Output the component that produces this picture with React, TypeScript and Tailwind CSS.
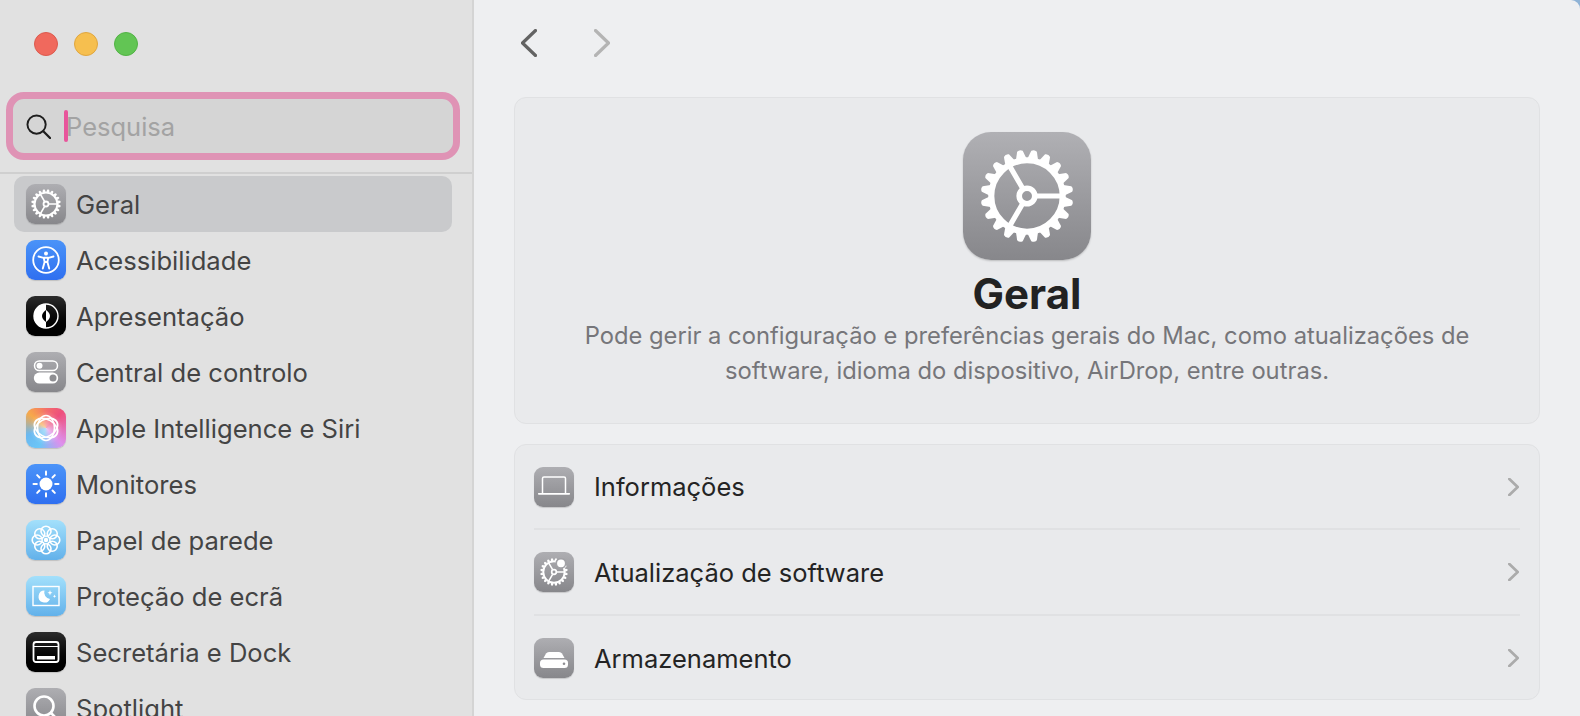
import { FC, ReactNode } from 'react'

const Gear: FC<{ className?: string; dot?: boolean }> = ({ className, dot }) => {
  const teeth = Array.from({ length: 20 }, (_, i) => i * 18 + 9)
  return (
    <svg viewBox="0 0 100 100" className={className}>
      {teeth.map(a => (
        <path key={a} d="M44.5 10 L47 1.8 Q50 -0.4 53 1.8 L55.5 10 Z" fill="white" transform={`rotate(${a} 50 50)`} />
      ))}
      <circle cx="50" cy="50" r="38" fill="none" stroke="white" strokeWidth="6.5" />
      <circle cx="50" cy="50" r="8.3" fill="none" stroke="white" strokeWidth="6" />
      <path d="M60 50 H87 M45 41.3 L31.5 18 M45 58.7 L31.5 82" stroke="white" strokeWidth="5.5" fill="none" />
      {dot && <circle cx="75" cy="19" r="17" fill="white" stroke="#a2a2a6" strokeWidth="6" />}
    </svg>
  )
}

const Tile: FC<{ className: string; children: ReactNode }> = ({ className, children }) => (
  <div className={`flex h-10 w-10 shrink-0 items-center justify-center rounded-[9px] shadow-[0_1px_1px_rgba(0,0,0,0.15)] ${className}`}>
    {children}
  </div>
)

const grayTile = 'bg-gradient-to-b from-[#aeaeb2] to-[#87878b]'
const blueTile = 'bg-gradient-to-b from-[#4b93f8] to-[#2f6ff0]'
const skyTile = 'bg-gradient-to-b from-[#a3e0fb] to-[#62b1ea]'
const blackTile = 'bg-gradient-to-b from-[#2c2c2c] to-black'

const sidebarItems: { label: string; tile: string; icon: ReactNode }[] = [
  { label: 'Geral', tile: grayTile, icon: <Gear className="h-[30px] w-[30px]" /> },
  {
    label: 'Acessibilidade',
    tile: blueTile,
    icon: (
      <svg viewBox="0 0 30 30" className="h-[30px] w-[30px]" fill="none" stroke="white">
        <circle cx="15" cy="15" r="12.8" strokeWidth="1.8" />
        <circle cx="15" cy="8.6" r="2" fill="white" stroke="none" />
        <path d="M7.5 11.5 L12.5 12.8 H17.5 L22.5 11.5 M12.8 13 L13.6 17 L11.8 23.5 M17.2 13 L16.4 17 L18.2 23.5 M13.6 17 H16.4" strokeWidth="1.9" strokeLinecap="round" />
      </svg>
    ),
  },
  {
    label: 'Apresentação',
    tile: blackTile,
    icon: (
      <svg viewBox="0 0 28 28" className="h-7 w-7">
        <circle cx="14" cy="14" r="12" fill="none" stroke="white" strokeWidth="1.4" />
        <path d="M14 2 A12 12 0 0 0 14 26 Z" fill="white" />
        <path d="M14 8 Q6 14 14 20 Z" fill="black" />
        <path d="M14 8 Q22 14 14 20 Z" fill="white" />
      </svg>
    ),
  },
  {
    label: 'Central de controlo',
    tile: grayTile,
    icon: (
      <svg viewBox="0 0 28 28" className="h-7 w-7">
        <rect x="2.5" y="3" width="23" height="9.5" rx="4.75" fill="none" stroke="white" strokeWidth="1.5" />
        <circle cx="7.5" cy="7.75" r="3" fill="white" />
        <rect x="1.8" y="14.6" width="24.4" height="11" rx="5.5" fill="white" />
        <circle cx="21" cy="20.1" r="3.5" fill="#8e8e92" />
      </svg>
    ),
  },
  {
    label: 'Apple Intelligence e Siri',
    tile: 'bg-[radial-gradient(circle,rgba(255,255,255,0.5),transparent_60%),conic-gradient(from_0deg_at_50%_50%,#f4706a,#ee4f7c_45deg,#dd90ec_135deg,#6cc6f7_200deg,#6ab8f0_250deg,#f7a94a_310deg,#f4706a)]',
    icon: (
      <svg viewBox="0 0 30 30" className="h-[30px] w-[30px]" fill="none" stroke="white" strokeWidth="1.7">
        {[30, 90, 150].map(a => (
          <ellipse key={a} cx="15" cy="15" rx="12.5" ry="8.5" transform={`rotate(${a} 15 15)`} />
        ))}
      </svg>
    ),
  },
  {
    label: 'Monitores',
    tile: blueTile,
    icon: (
      <svg viewBox="0 0 30 30" className="h-[30px] w-[30px]" stroke="white" strokeWidth="2" strokeLinecap="round">
        <circle cx="15" cy="15" r="6.5" fill="white" stroke="none" />
        {[0, 45, 90, 135, 180, 225, 270, 315].map(a => (
          <path key={a} d="M15 2.5 V5.8" transform={`rotate(${a} 15 15)`} />
        ))}
      </svg>
    ),
  },
  {
    label: 'Papel de parede',
    tile: skyTile,
    icon: (
      <svg viewBox="0 0 30 30" className="h-[30px] w-[30px]" fill="none" stroke="white" strokeWidth="1.6">
        {[0, 45, 90, 135, 180, 225, 270, 315].map(a => (
          <circle key={a} cx="15" cy="6.2" r="5" transform={`rotate(${a} 15 15)`} />
        ))}
        <circle cx="15" cy="15" r="2.2" fill="white" stroke="none" />
      </svg>
    ),
  },
  {
    label: 'Proteção de ecrã',
    tile: skyTile,
    icon: (
      <svg viewBox="0 0 30 30" className="h-[30px] w-[30px]" fill="none">
        <rect x="2" y="5.5" width="26" height="19" stroke="white" strokeWidth="1.4" />
        <path d="M13.5 9.5 A6 6 0 1 0 19 18 A6.5 6.5 0 0 1 13.5 9.5 Z" fill="white" />
        <path d="M19 9 L19.7 11 L21.5 11.7 L19.7 12.4 L19 14.4 L18.3 12.4 L16.5 11.7 L18.3 11 Z M23.5 13.5 L24 14.8 L25.3 15.3 L24 15.8 L23.5 17 L23 15.8 L21.7 15.3 L23 14.8 Z" fill="white" />
      </svg>
    ),
  },
  {
    label: 'Secretária e Dock',
    tile: blackTile,
    icon: (
      <svg viewBox="0 0 30 30" className="h-[30px] w-[30px]" fill="none">
        <rect x="2.5" y="5" width="25" height="20" rx="2.5" stroke="white" strokeWidth="1.8" />
        <path d="M3 9.5 H27" stroke="white" strokeWidth="1" />
        <rect x="6" y="19" width="18" height="3.5" fill="white" />
      </svg>
    ),
  },
  {
    label: 'Spotlight',
    tile: grayTile,
    icon: (
      <svg viewBox="0 0 30 30" className="h-[30px] w-[30px]" fill="none" stroke="white" strokeWidth="2.6" strokeLinecap="round">
        <circle cx="13" cy="13" r="9.5" />
        <path d="M20 20 L27 27" />
      </svg>
    ),
  },
]

const settingsRows: { label: string; height: string; icon: ReactNode }[] = [
  {
    label: 'Informações',
    height: 'h-[83px]',
    icon: (
      <svg viewBox="0 0 32 32" className="h-8 w-8" fill="none" stroke="white">
        <path d="M4.5 22 V7.5 Q4.5 6 6 6 H26 Q27.5 6 27.5 7.5 V22" strokeWidth="1.5" />
        <path d="M0.8 22.8 H31.2" strokeWidth="1.8" strokeLinecap="round" />
      </svg>
    ),
  },
  { label: 'Atualização de software', height: 'h-[86px]', icon: <Gear className="h-7 w-7" dot /> },
  {
    label: 'Armazenamento',
    height: 'h-[86px]',
    icon: (
      <svg viewBox="0 0 30 30" className="h-[30px] w-[30px]">
        <path d="M4.5 15 L7 10.5 Q8 9 10 9 H20 Q22 9 23 10.5 L25.5 15 Z" fill="white" />
        <rect x="1" y="16.5" width="28" height="8.5" rx="3.5" fill="white" />
        <circle cx="25" cy="20.7" r="1.3" fill="#8e8e92" />
      </svg>
    ),
  },
]

const Chevron: FC<{ dir: 'left' | 'right'; className: string; weight?: number }> = ({ dir, className, weight = 3.2 }) => (
  <svg viewBox="0 0 16 28" className={className} fill="none" stroke="currentColor" strokeWidth={weight} strokeLinecap="round" strokeLinejoin="round">
    <path d={dir === 'left' ? 'M14.5 1.5 L1.5 14 L14.5 26.5' : 'M1.5 1.5 L14.5 14 L1.5 26.5'} />
  </svg>
)

export default function App() {
  return (
    <div className="flex h-[716px] w-[1580px] overflow-hidden bg-[#8fb3d6] font-['Inter',sans-serif]">
      {/* Barra lateral */}
      <aside className="flex h-full w-[474px] shrink-0 flex-col overflow-hidden border-r-2 border-[#d4d4d4] bg-[#e1e1e1]">
        <div className="flex shrink-0 gap-4 pl-[34px] pt-8">
          <span className="h-6 w-6 rounded-full border border-[#dc5a4e] bg-[#f0695d]" />
          <span className="h-6 w-6 rounded-full border border-[#e0a63f] bg-[#f6bf4f]" />
          <span className="h-6 w-6 rounded-full border border-[#52b345] bg-[#62c554]" />
        </div>

        <div className="ml-[6px] mt-9 flex h-[68px] w-[454px] shrink-0 items-center rounded-[18px] border-[7px] border-[#df93b5] bg-[#d5d5d5] pl-[13px]">
          <svg viewBox="0 0 26 26" className="h-[25px] w-[25px] shrink-0" fill="none" stroke="#1e1e1e" strokeWidth="2" strokeLinecap="round">
            <circle cx="11" cy="11" r="9.5" />
            <path d="M18 18 L25 25" strokeWidth="2.4" />
          </svg>
          <span className="ml-[13px] h-8 w-1 shrink-0 rounded-full bg-[#e8559b]" />
          <span className="-ml-[2px] pt-[2px] text-[25.5px] leading-8 text-[#a3a3a3]">Pesquisa</span>
        </div>

        <div className="mt-3 h-[2px] shrink-0 bg-[#cfcfcf]" />

        <ul className="flex flex-col pl-[14px] pr-[20px] pt-[2px]">
          {sidebarItems.map((item, i) => (
            <li
              key={item.label}
              className={`flex h-14 shrink-0 items-center gap-[10px] rounded-[10px] pl-3 text-[25.6px] text-[#444444] ${i === 0 ? 'bg-[#c9cacc]' : ''}`}
            >
              <Tile className={item.tile}>{item.icon}</Tile>
              <span className="whitespace-nowrap pt-[2px]">{item.label}</span>
            </li>
          ))}
        </ul>
      </aside>

      {/* Conteúdo */}
      <main className="flex min-w-0 flex-1 flex-col rounded-tr-[9px] bg-[#eeeff1] pl-[40px] pr-[40px]">
        <div className="flex h-[97px] shrink-0 gap-[57px] pl-[7px] pt-[29px]">
          <Chevron dir="left" className="h-[28px] w-4 text-[#636363]" />
          <Chevron dir="right" className="h-[28px] w-4 text-[#b4b4b4]" />
        </div>

        <section className="flex h-[327px] shrink-0 flex-col items-center rounded-xl border border-[#e0e1e3] bg-[#e9eaec] pt-[34px]">
          <div className="flex h-32 w-32 items-center justify-center rounded-[28px] bg-gradient-to-b from-[#b0b0b4] to-[#87878b] shadow-[0_1px_2px_rgba(0,0,0,0.2)]">
            <Gear className="h-[94px] w-[94px]" />
          </div>
          <h1 className="mt-[9px] text-[42px] font-bold leading-[50px] text-[#222222]">Geral</h1>
          <p className="w-[900px] text-center text-[23.75px] leading-[34.5px] text-[#76767a]">
            Pode gerir a configuração e preferências gerais do Mac, como atualizações de software, idioma do dispositivo, AirDrop, entre outras.
          </p>
        </section>

        <section className="mt-5 h-[256px] shrink-0 overflow-hidden rounded-xl border border-[#e0e1e3] bg-[#e9eaec] px-[19px]">
          {settingsRows.map((row, i) => (
            <div
              key={row.label}
              className={`flex items-center gap-5 ${row.height} ${i > 0 ? 'border-t-2 border-[#e0e1e3]' : ''}`}
            >
              <Tile className={grayTile}>{row.icon}</Tile>
              <span className="flex-1 pt-[2px] text-[25.5px] text-[#242424]">{row.label}</span>
              <Chevron dir="right" className="mr-[1px] h-[18px] w-[11px] text-[#ababab]" weight={4.2} />
            </div>
          ))}
        </section>
      </main>
    </div>
  )
}
